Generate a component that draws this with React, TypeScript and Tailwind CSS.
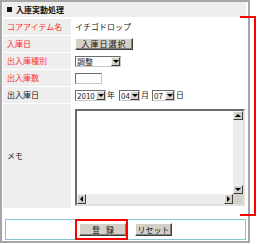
import type { ReactNode } from "react";

function Arrow({ dir }: { dir: "down" | "up" | "left" | "right" }) {
  if (dir === "down")
    return <span className="w-0 h-0 border-x-[3px] border-x-transparent border-t-[3px] border-t-black" />;
  if (dir === "up")
    return <span className="w-0 h-0 border-x-[3px] border-x-transparent border-b-[3px] border-b-black" />;
  if (dir === "left")
    return <span className="w-0 h-0 border-y-[3px] border-y-transparent border-r-[3px] border-r-black" />;
  return <span className="w-0 h-0 border-y-[3px] border-y-transparent border-l-[3px] border-l-black" />;
}

// small 3D arrow button like old windows controls
function ArrowBox({ dir, className = "" }: { dir: "down" | "up" | "left" | "right"; className?: string }) {
  return (
    <span
      className={`flex items-center justify-center bg-[#d4d0c8] border border-t-[#f4f4f4] border-l-[#f4f4f4] border-r-[#404040] border-b-[#404040] ${className}`}
    >
      <Arrow dir={dir} />
    </span>
  );
}

function Select({ value, width }: { value: string; width: string }) {
  return (
    <div className={`flex h-[11px] ${width} items-stretch border border-t-[#6b6b6b] border-l-[#6b6b6b] border-r-[#c8c8c8] border-b-[#c8c8c8] bg-white`}>
      <span className="flex-1 pl-[1px] text-[8px] leading-[9px] text-[#222]">{value}</span>
      <ArrowBox dir="down" className="w-[9px]" />
    </div>
  );
}

function Row({ label, red, tall, children }: { label: string; red?: boolean; tall?: boolean; children?: ReactNode }) {
  return (
    <div className={`flex gap-[2px] ${tall ? "h-[104px]" : "h-[16px]"}`}>
      <div
        className={`w-[68px] shrink-0 bg-[#eeeeee] flex items-center pl-[4px] text-[8px] ${red ? "text-[#ff3333]" : "text-[#222]"}`}
      >
        {label}
      </div>
      <div className={`flex-1 flex pl-[2px] ${tall ? "items-start pt-[5px]" : "items-center"}`}>{children}</div>
    </div>
  );
}

function Memo() {
  return (
    <div className="w-[170px] h-[97px] flex flex-col border-2 border-t-[#6b6b6b] border-l-[#6b6b6b] border-r-[#e0e0e0] border-b-[#e0e0e0] bg-white">
      <div className="flex flex-1">
        <div className="flex-1" />
        <div className="w-[10px] flex flex-col bg-[#ececec]">
          <ArrowBox dir="up" className="h-[9px]" />
          <div className="flex-1" />
          <ArrowBox dir="down" className="h-[9px]" />
        </div>
      </div>
      <div className="flex h-[10px]">
        <div className="flex flex-1 bg-[#ececec]">
          <ArrowBox dir="left" className="w-[9px]" />
          <div className="flex-1" />
          <ArrowBox dir="right" className="w-[9px]" />
        </div>
        <div className="w-[10px] bg-[#d4d0c8]" />
      </div>
    </div>
  );
}

const btn =
  "flex items-center justify-center bg-[#d4d0c8] border border-t-white border-l-white border-r-[#404040] border-b-[#404040] shadow-[inset_-1px_-1px_0_#808080] text-[8px] leading-none text-[#111]";

export default function App() {
  return (
    <div className="relative w-[257px] h-[244px] bg-white font-['Noto_Sans_CJK_JP',sans-serif]">
      <div className="w-[250px] h-[243px] border-2 border-[#a6a6a6] pl-[1px] pr-[2px] flex flex-col">
        <div className="h-[15px] bg-[#eeeeee] flex items-center pl-[4px] gap-[4px] text-[8px] font-bold text-[#111] mb-[2px]">
          <span className="w-[5px] h-[5px] bg-[#111]" />
          <span>入庫実動処理</span>
        </div>
        <div className="flex flex-col gap-[1px]">
          <Row label="コアアイテム名" red>
            <span className="text-[8px] text-[#222]">イチゴドロップ</span>
          </Row>
          <Row label="入庫日" red>
            <button className={`${btn} w-[58px] h-[12px] tracking-[1px]`}>入庫日選択</button>
          </Row>
          <Row label="出入庫種別" red>
            <Select value="調整" width="w-[46px]" />
          </Row>
          <Row label="出入庫数" red>
            <div className="w-[27px] h-[11px] border border-t-[#6b6b6b] border-l-[#6b6b6b] border-r-[#c8c8c8] border-b-[#c8c8c8] bg-white" />
          </Row>
          <Row label="出入庫日">
            <div className="flex items-center text-[8px] text-[#222]">
              <Select value="2010" width="w-[31px]" />
              <span className="ml-[1px] mr-[4px]">年</span>
              <Select value="04" width="w-[21px]" />
              <span className="ml-[1px] mr-[3px]">月</span>
              <Select value="07" width="w-[23px]" />
              <span className="ml-[1px]">日</span>
            </div>
          </Row>
          <Row label="メモ" tall>
            <Memo />
          </Row>
        </div>
        <div className="mt-[11px] ml-[2px] h-[21px] border-[1.5px] border-[#86c3d3] flex items-center justify-center gap-[8px]">
          <button className={`${btn} w-[48px] h-[13px] tracking-[6px] pl-[6px]`}>登録</button>
          <button className={`${btn} w-[37px] h-[13px]`}>リセット</button>
        </div>
      </div>
      {/* red annotation marks */}
      <div className="absolute left-[240px] top-[16px] w-[16px] h-[200px] border-t-2 border-r-2 border-b-2 border-[#ff0000]" />
      <div className="absolute left-[75px] top-[219px] w-[53px] h-[21px] border-2 border-[#ff0000]" />
    </div>
  );
}
